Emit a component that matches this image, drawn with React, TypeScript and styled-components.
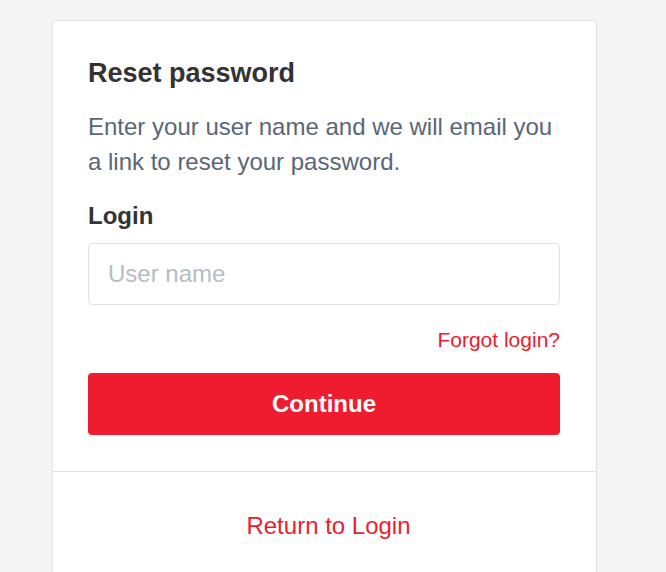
import React from "react";
import styled, { createGlobalStyle } from "styled-components";

const Global = createGlobalStyle`
  html, body { margin: 0; padding: 0; background: #f4f4f4; }
  body { font-family: "Liberation Sans", Arial, sans-serif; }
  * { box-sizing: border-box; }
`;

const Page = styled.div`
  min-height: 572px;
  padding: 20px 0 0 52px;
`;

const Card = styled.div`
  width: 545px;
  min-height: 560px;
  background: #fff;
  border: 1px solid #e2e2e2;
  border-bottom: none;
  border-radius: 4px 4px 0 0;
`;

const Body = styled.div`
  padding: 36px 36px 36px 35px;
  display: flex;
  flex-direction: column;
`;

const Title = styled.h1`
  margin: 0;
  font-size: 27px;
  line-height: 32px;
  font-weight: 700;
  color: #333;
`;

const Intro = styled.p`
  margin: 20px 0 0;
  font-size: 24px;
  line-height: 35px;
  color: #5a6678;
`;

const Label = styled.label`
  margin-top: 22px;
  font-size: 24px;
  line-height: 29px;
  font-weight: 700;
  color: #333;
`;

const Input = styled.input`
  margin-top: 13px;
  height: 62px;
  width: 100%;
  border: 1px solid #e2e2e2;
  border-radius: 4px;
  padding: 0 19px;
  font-family: inherit;
  font-size: 24px;
  color: #333;
  outline: none;
  &::placeholder { color: #b5bcc5; }
`;

const LinkRow = styled.div`
  margin-top: 23px;
  display: flex;
  justify-content: flex-end;
`;

const RedLink = styled.a<{ $size: number; $lh: number }>`
  font-size: ${(p) => p.$size}px;
  line-height: ${(p) => p.$lh}px;
  color: #ee1c2e;
  text-decoration: none;
  cursor: pointer;
`;

const Button = styled.button`
  margin-top: 21px;
  height: 62px;
  width: 100%;
  border: none;
  border-radius: 4px;
  background: #ee1c2e;
  color: #fff;
  font-family: inherit;
  font-size: 24px;
  font-weight: 700;
  cursor: pointer;
`;

const Footer = styled.div`
  border-top: 1px solid #e2e2e2;
  padding: 37px 0 36px 8px;
  display: flex;
  justify-content: center;
`;

export default function App() {
  return (
    <Page>
      <Global />
      <Card>
        <Body>
          <Title>Reset password</Title>
          <Intro>Enter your user name and we will email you a link to reset your password.</Intro>
          <Label htmlFor="login">Login</Label>
          <Input id="login" placeholder="User name" />
          <LinkRow>
            <RedLink $size={21} $lh={24}>Forgot login?</RedLink>
          </LinkRow>
          <Button>Continue</Button>
        </Body>
        <Footer>
          <RedLink $size={24} $lh={34}>Return to Login</RedLink>
        </Footer>
      </Card>
    </Page>
  );
}
